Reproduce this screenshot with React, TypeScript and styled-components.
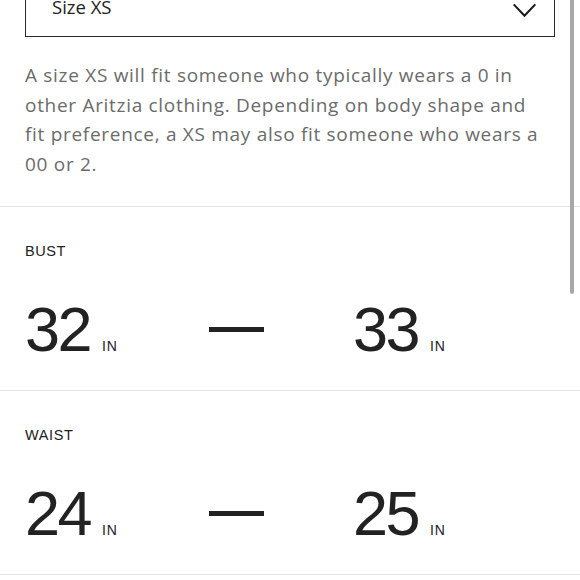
import React from "react";
import styled, { createGlobalStyle } from "styled-components";

const GlobalStyle = createGlobalStyle`
	html, body {
		margin: 0;
		padding: 0;
		background: #fff;
		overflow: hidden;
	}
	body {
		font-family: "Open Sans", "Liberation Sans", sans-serif;
		color: #222;
	}
`;

interface Measurement {
	label: string;
	from: number;
	to: number;
	unit: string;
}

const measurements: Measurement[] = [
	{ label: "BUST", from: 32, to: 33, unit: "IN" },
	{ label: "WAIST", from: 24, to: 25, unit: "IN" },
];

const App = () => {
	return (
		<React.Fragment>
			<GlobalStyle />
			<Page>
				<Intro>
					<Select>
						<SelectValue>Size XS</SelectValue>
						<Chevron viewBox="0 0 26 16">
							<path d="M1.5 1.5 L13 13.5 L24.5 1.5" />
						</Chevron>
					</Select>
					<Description>
						A size XS will fit someone who typically wears a 0 in
						other Aritzia clothing. Depending on body shape and
						fit preference, a XS may also fit someone who wears a
						00 or 2.
					</Description>
				</Intro>
				{measurements.map((m) => (
					<Section key={m.label}>
						<Label>{m.label}</Label>
						<Range>
							<Value>
								<Number>{m.from}</Number>
								<Unit>{m.unit}</Unit>
							</Value>
							<Dash />
							<Value>
								<Number>{m.to}</Number>
								<Unit>{m.unit}</Unit>
							</Value>
						</Range>
					</Section>
				))}
			</Page>
			<ScrollThumb />
		</React.Fragment>
	);
};

const Page = styled.div`
	margin-top: -19px;
	width: 580px;
`;

const Intro = styled.div`
	padding: 0 25px 27px;
	border-bottom: 1.5px solid #e2e2e2;
`;

const Select = styled.div`
	height: 54px;
	border: 1.5px solid #2a2a2a;
	display: flex;
	align-items: center;
	justify-content: space-between;
	padding: 0 17px 0 26px;
`;

const SelectValue = styled.span`
	font-family: "Open Sans", sans-serif;
	font-size: 18.5px;
	margin-top: -5px;
	color: #222;
`;

const Chevron = styled.svg`
	width: 25px;
	height: 15px;
	margin-top: 2px;
	fill: none;
	stroke: #1a1a1a;
	stroke-width: 2.2;
`;

const Description = styled.p`
	margin: 24px 0 0;
	max-width: 524px;
	font-family: "Open Sans", sans-serif;
	font-size: 19px;
	line-height: 29.5px;
	letter-spacing: 0.7px;
	color: #6b6b6b;
`;

const Section = styled.div`
	height: 184px;
	padding: 0 25px;
	border-bottom: 1.5px solid #e2e2e2;
	box-sizing: border-box;
`;

const Label = styled.div`
	padding-top: 36px;
	font-family: "Liberation Sans", sans-serif;
	font-size: 14.5px;
	letter-spacing: 0.6px;
	color: #222;
	line-height: 16px;
`;

const Range = styled.div`
	display: grid;
	grid-template-columns: 184px 144px 1fr;
	align-items: center;
	margin-top: 38px;
`;

const Value = styled.div`
	display: flex;
	align-items: baseline;
	gap: 12px;
`;

const Number = styled.span`
	font-family: "Liberation Sans", sans-serif;
	font-size: 63px;
	letter-spacing: -2.5px;
	line-height: 64px;
	color: #222;
`;

const Unit = styled.span`
	font-family: "Liberation Sans", sans-serif;
	font-size: 14px;
	letter-spacing: 0.8px;
	color: #222;
`;

const Dash = styled.div`
	width: 55px;
	height: 5px;
	background: #222;
`;

const ScrollThumb = styled.div`
	position: fixed;
	top: -6px;
	right: 6px;
	width: 4px;
	height: 300px;
	border-radius: 2px;
	background: #a8a8a8;
`;

export default App;
